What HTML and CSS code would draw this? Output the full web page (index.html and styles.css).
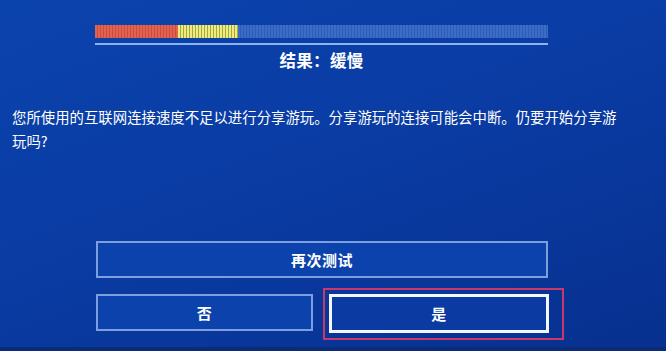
FILE: index.html
```html
<!DOCTYPE html>
<html lang="zh-CN">
<head>
<meta charset="utf-8">
<link rel="stylesheet" href="styles.css">
</head>
<body>
<div class="screen">
  <div class="meter">
    <div class="bar">
      <div class="seg red"></div>
      <div class="seg yellow"></div>
      <div class="seg blue"></div>
    </div>
    <div class="rule"></div>
    <div class="result">结果：缓慢</div>
  </div>
  <p class="message">您所使用的互联网连接速度不足以进行分享游玩。分享游玩的连接可能会中断。仍要开始分享游玩吗?</p>
  <div class="actions">
    <div class="btn">再次测试</div>
    <div class="row">
      <div class="btn">否</div>
      <div class="btn focused">是<span class="mark"></span></div>
    </div>
  </div>
  <div class="bottom"></div>
</div>
</body>
</html>
```
FILE: styles.css
```css
html, body {
  margin: 0;
  padding: 0;
}
body {
  width: 666px;
  height: 351px;
  overflow: hidden;
  font-family: "Noto Sans CJK SC", "Noto Sans", sans-serif;
  color: #fff;
}
.screen {
  width: 666px;
  height: 351px;
  display: flex;
  flex-direction: column;
  background: linear-gradient(160deg, #0b43ad 0%, #0a3ca4 45%, #07308f 100%);
  position: relative;
}
.meter {
  margin: 25px 0 0 95px;
  width: 453px;
  display: flex;
  flex-direction: column;
  align-items: center;
}
.bar {
  width: 453px;
  height: 13px;
  display: flex;
}
.seg {
  height: 100%;
}
.red {
  width: 83px;
  background: repeating-linear-gradient(90deg, #e4634f 0 2px, #c94d45 2px 3px);
}
.yellow {
  width: 60px;
  background: repeating-linear-gradient(90deg, #eded7a 0 2px, #a6a44e 2px 3px);
}
.blue {
  flex: 1;
  background: repeating-linear-gradient(90deg, #3b6cc6 0 2px, #2d5bb6 2px 3px);
}
.rule {
  width: 453px;
  height: 2px;
  margin-top: 5px;
  background: #8fb2ec;
}
.result {
  margin-top: 3px;
  font-size: 16.5px;
  font-weight: 700;
  line-height: 24px;
  letter-spacing: 0.3px;
}
.message {
  margin: 33px 0 0 12px;
  width: 612px;
  font-size: 14.4px;
  line-height: 24px;
  letter-spacing: 0;
}
.actions {
  margin: 88px 0 0 96px;
  width: 452px;
  display: flex;
  flex-direction: column;
  gap: 16px;
}
.btn {
  height: 37px;
  box-sizing: border-box;
  border: 2px solid #7c9fe0;
  background: #0c42ab;
  display: flex;
  align-items: center;
  justify-content: center;
  font-size: 15px;
  font-weight: 700;
  letter-spacing: 0.5px;
  position: relative;
}
.row {
  display: grid;
  grid-template-columns: 217px 220px;
  column-gap: 16px;
}
.btn.focused {
  border: 3px solid #f4f7ff;
  background: #0a3aa2;
  height: 39px;
}
.mark {
  position: absolute;
  left: -9px;
  top: -9px;
  right: -18px;
  bottom: -10px;
  border: 2px solid #c9386a;
}
.bottom {
  position: absolute;
  left: 0;
  right: 0;
  bottom: 0;
  height: 4px;
  background: #0b2a78;
}
```
